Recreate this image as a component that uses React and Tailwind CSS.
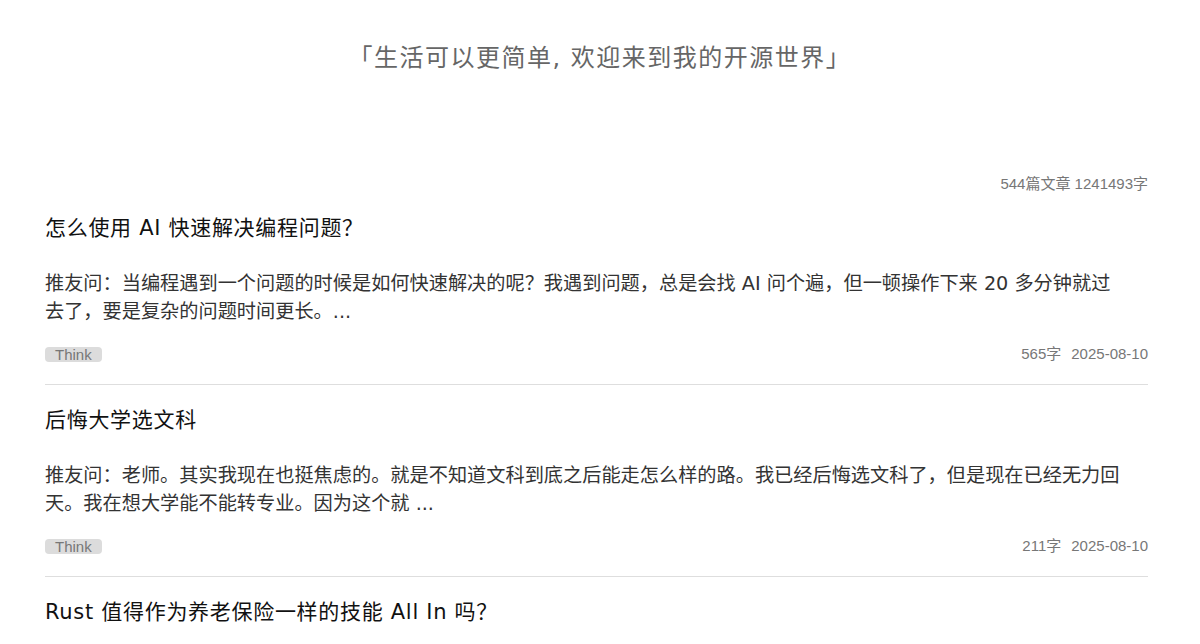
const posts = [
  {
    title: "怎么使用 AI 快速解决编程问题？",
    excerpt:
      "推友问：当编程遇到一个问题的时候是如何快速解决的呢？我遇到问题，总是会找 AI 问个遍，但一顿操作下来 20 多分钟就过去了，要是复杂的问题时间更长。...",
    tag: "Think",
    words: 565,
    date: "2025-08-10",
  },
  {
    title: "后悔大学选文科",
    excerpt:
      "推友问：老师。其实我现在也挺焦虑的。就是不知道文科到底之后能走怎么样的路。我已经后悔选文科了，但是现在已经无力回天。我在想大学能不能转专业。因为这个就 ...",
    tag: "Think",
    words: 211,
    date: "2025-08-10",
  },
  {
    title: "Rust 值得作为养老保险一样的技能 All In 吗？",
    excerpt:
      "推友问：最近看到很多人在说 Rust 是未来，想问一下值不值得花大量时间去学，把它当成养老保险一样的技能来投入？...",
    tag: "Think",
    words: 342,
    date: "2025-08-09",
  },
];

const cjk = "font-['DejaVu_Sans','Noto_Sans_CJK_SC',sans-serif]";
const meta = "font-['Liberation_Sans','Noto_Sans_CJK_SC',sans-serif]";

function PostItem({ post }) {
  return (
    <article className="border-b border-[#dedede] pt-[21px] pb-[20px]">
      <h2
        className={`${cjk} text-[21px] leading-[28px] tracking-[0.7px] text-[#111]`}
      >
        {post.title}
      </h2>
      <p
        className={`${cjk} mt-[28px] w-[1080px] text-[19.2px] leading-[28px] text-[#333]`}
      >
        {post.excerpt}
      </p>
      <div className={`${meta} mt-[18px] flex h-[20px] items-center justify-between`}>
        <span className="rounded-[4px] bg-[#dcdcdc] px-[10px] text-[15px] leading-[15px] text-[#777]">
          {post.tag}
        </span>
        <div className="flex gap-[10px] text-[15px] text-[#777]">
          <span>{post.words}字</span>
          <span>{post.date}</span>
        </div>
      </div>
    </article>
  );
}

export default function App() {
  return (
    <div className="min-h-screen bg-white">
      <header className="h-[175px] pt-[42px] text-center">
        <h1
          className={`${cjk} text-[24px] leading-[32px] tracking-[1.5px] text-[#666]`}
        >
          「生活可以更简单, 欢迎来到我的开源世界」
        </h1>
      </header>

      <main className="pl-[45px] pr-[52px]">
        <div className={`${meta} text-right text-[15px] leading-[18px] text-[#777]`}>
          544篇文章 1241493字
        </div>
        {posts.map((post) => (
          <PostItem key={post.title} post={post} />
        ))}
      </main>
    </div>
  );
}
